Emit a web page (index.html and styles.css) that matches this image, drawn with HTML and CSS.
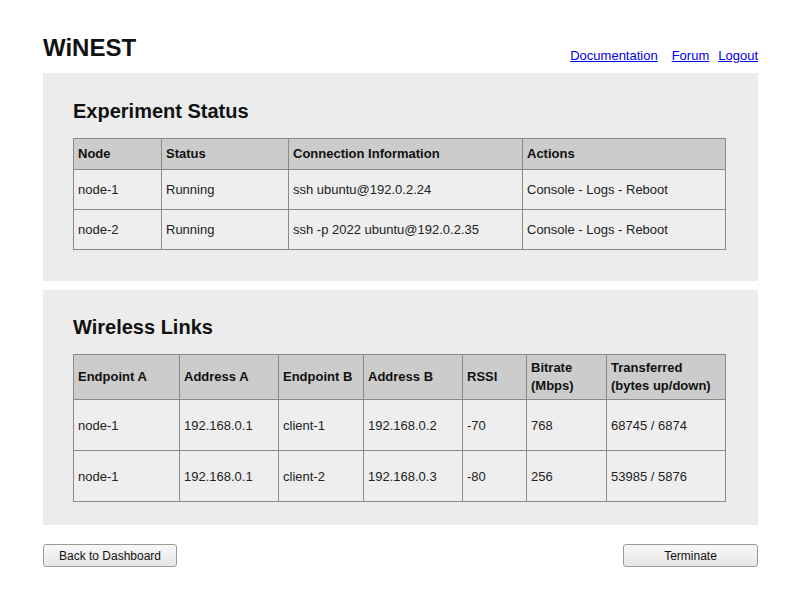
FILE: index.html
```html
<!DOCTYPE html>
<html>
<head>
<meta charset="utf-8">
<link rel="stylesheet" href="styles.css">
</head>
<body>
<div class="page">
  <header class="top">
    <h1 class="brand">WiNEST</h1>
    <nav class="links">
      <a href="#">Documentation</a>
      <a href="#" class="l-forum">Forum</a>
      <a href="#" class="l-logout">Logout</a>
    </nav>
  </header>

  <section class="panel panel-status">
    <h2>Experiment Status</h2>
    <table class="grid t1">
      <colgroup>
        <col style="width:88px"><col style="width:127px"><col style="width:234px"><col>
      </colgroup>
      <thead>
        <tr><th>Node</th><th>Status</th><th>Connection Information</th><th>Actions</th></tr>
      </thead>
      <tbody>
        <tr><td>node-1</td><td>Running</td><td>ssh ubuntu@192.0.2.24</td><td>Console - Logs - Reboot</td></tr>
        <tr><td>node-2</td><td>Running</td><td>ssh -p 2022 ubuntu@192.0.2.35</td><td>Console - Logs - Reboot</td></tr>
      </tbody>
    </table>
  </section>

  <section class="panel panel-links">
    <h2>Wireless Links</h2>
    <table class="grid t2">
      <colgroup>
        <col style="width:106px"><col style="width:99px"><col style="width:85px"><col style="width:99px"><col style="width:64px"><col style="width:80px"><col>
      </colgroup>
      <thead>
        <tr><th>Endpoint A</th><th>Address A</th><th>Endpoint B</th><th>Address B</th><th>RSSI</th><th>Bitrate<br>(Mbps)</th><th>Transferred<br>(bytes up/down)</th></tr>
      </thead>
      <tbody>
        <tr><td>node-1</td><td>192.168.0.1</td><td>client-1</td><td>192.168.0.2</td><td>-70</td><td>768</td><td>68745 / 6874</td></tr>
        <tr><td>node-1</td><td>192.168.0.1</td><td>client-2</td><td>192.168.0.3</td><td>-80</td><td>256</td><td>53985 / 5876</td></tr>
      </tbody>
    </table>
  </section>

  <div class="actions">
    <button class="btn btn-back">Back to Dashboard</button>
    <button class="btn btn-term">Terminate</button>
  </div>
</div>
</body>
</html>
```

FILE: styles.css
```css
html, body {
  margin: 0;
  padding: 0;
  background: #ffffff;
}
body {
  font-family: "Liberation Sans", Arial, sans-serif;
  color: #111;
}
.page {
  width: 715px;
  margin-left: 43px;
}
.top {
  display: flex;
  justify-content: space-between;
  align-items: flex-end;
  height: 73px;
}
.brand {
  margin: 0;
  font-size: 24px;
  font-weight: bold;
  line-height: 28px;
  position: relative;
  top: -11px;
}
.links {
  display: flex;
  font-size: 13px;
  line-height: 15px;
  padding-bottom: 10px;
}
.links a {
  color: #0000ee;
  text-decoration: underline;
}
.links a.l-forum {
  margin-left: 14px;
}
.links a.l-logout {
  margin-left: 9px;
}
.panel {
  background: #ececec;
  padding: 25px 32px 31px 30px;
}
.panel-links {
  margin-top: 9px;
  padding-top: 24px;
  padding-bottom: 23px;
}
.panel h2 {
  margin: 0 0 14px 0;
  font-size: 20px;
  font-weight: bold;
  line-height: 26px;
}
.grid {
  width: 653px;
  border-collapse: collapse;
  table-layout: fixed;
  font-size: 13px;
  color: #222;
}
.grid th, .grid td {
  border: 1px solid #8a8a8a;
  text-align: left;
  padding: 0 4px;
  vertical-align: middle;
}
.grid th {
  background: #cccccc;
  font-weight: bold;
  color: #111;
  line-height: 16px;
}
.grid td {
  background: #eeeeee;
}
.t1 th { height: 30px; }
.t1 td { height: 39px; }
.t2 th { height: 44px; line-height: 18px; }
.t2 td { height: 50px; }
.actions {
  display: flex;
  justify-content: space-between;
  margin-top: 19px;
}
.btn {
  font-family: "Liberation Sans", Arial, sans-serif;
  font-size: 12px;
  color: #111;
  height: 23px;
  border: 1px solid #a39a8e;
  border-radius: 3px;
  background: linear-gradient(#f8f8f8, #e6e6e6);
  padding: 0;
}
.btn-back { width: 134px; }
.btn-term { width: 135px; }
```
